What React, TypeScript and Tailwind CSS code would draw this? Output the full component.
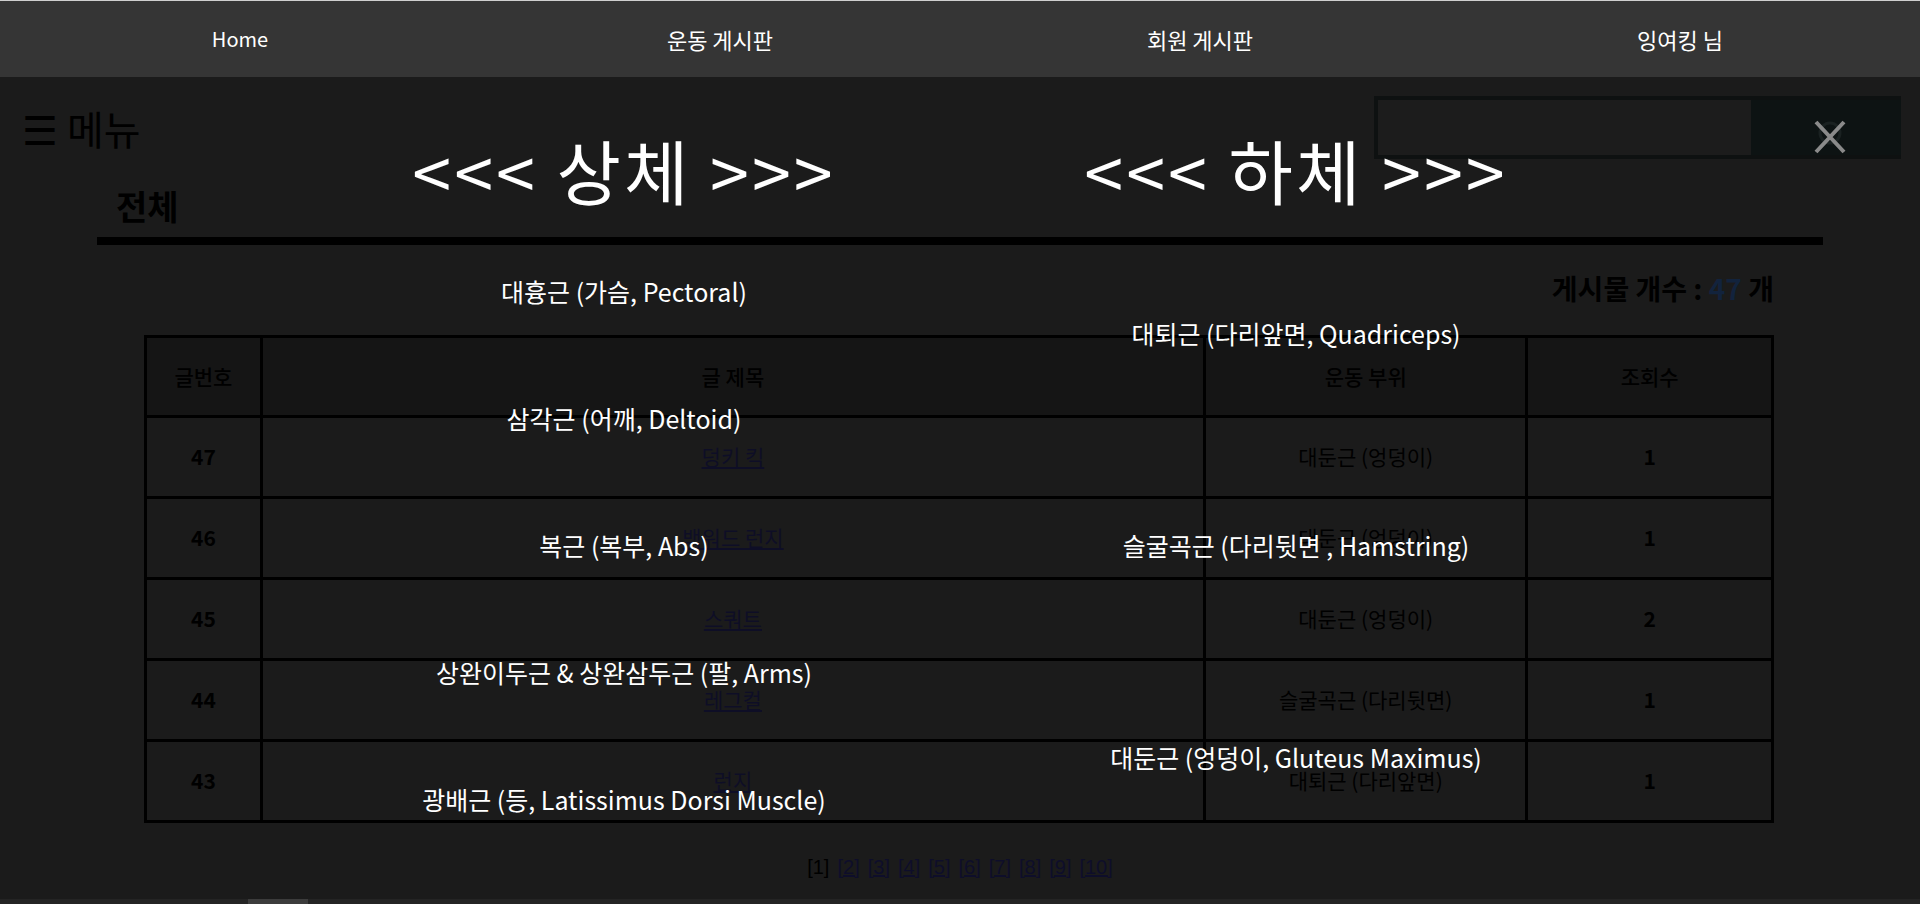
import React from "react";

const rows = [
  { no: 47, title: "덩키 킥", part: "대둔근 (엉덩이)", views: 1 },
  { no: 46, title: "백워드 런지", part: "대둔근 (엉덩이)", views: 1 },
  { no: 45, title: "스쿼트", part: "대둔근 (엉덩이)", views: 2 },
  { no: 44, title: "레그컬", part: "슬굴곡근 (다리뒷면)", views: 1 },
  { no: 43, title: "런지", part: "대퇴근 (다리앞면)", views: 1 },
];

const upper = [
  "대흉근 (가슴, Pectoral)",
  "삼각근 (어깨, Deltoid)",
  "복근 (복부, Abs)",
  "상완이두근 & 상완삼두근 (팔, Arms)",
  "광배근 (등, Latissimus Dorsi Muscle)",
];

const lower = [
  "대퇴근 (다리앞면, Quadriceps)",
  "슬굴곡근 (다리뒷면 , Hamstring)",
  "대둔근 (엉덩이, Gluteus Maximus)",
];

export default function App() {
  return (
    <div className="relative w-[1920px] h-[904px] overflow-hidden bg-[#1b1b1b] font-['Noto_Sans_CJK_KR',sans-serif] flex flex-col">
      {/* Nav */}
      <nav className="h-[77px] shrink-0 border-t border-[#cfcfcf] bg-[#353535] grid grid-cols-4 items-center text-white text-[22px]">
        <div className="text-center text-[20px]">Home</div>
        <div className="text-center">운동 게시판</div>
        <div className="text-center">회원 게시판</div>
        <div className="text-center">잉여킹 님</div>
      </nav>

      {/* Dimmed page */}
      <div className="flex items-center justify-between mt-[19px] h-[63px] pl-[22px] pr-[19px]">
        <div className="text-[40px] leading-none text-black">☰ 메뉴</div>
        <div className="w-[527px] h-[63px] bg-[#0e1111] flex p-[4px] pr-0">
          <div className="w-[373px] h-full bg-[#1c1c1c]" />
          <div className="flex-1 h-full bg-[#0d1313]" />
        </div>
      </div>

      <div className="mt-[23px] ml-[116px] text-[34px] leading-[48px] font-bold text-black">전체</div>
      <div className="mt-[7px] ml-[97px] w-[1726px] h-[8px] bg-black" />

      <div className="ml-[144px] w-[1630px]">
        <div className="mt-[24px] text-right text-[28px] leading-[38px] font-bold text-black">
          게시물 개수 : <span className="text-[#12233d]">47</span> 개
        </div>
        <table className="mt-[28px] w-[1630px] border-collapse border-[3px] border-black text-black text-[21px]">
          <thead>
            <tr className="h-[80px] bg-[#151515]">
              <th className="w-[116px] border-[3px] border-black font-medium">글번호</th>
              <th className="w-[945px] border-[3px] border-black font-medium">글 제목</th>
              <th className="w-[323px] border-[3px] border-black font-medium">운동 부위</th>
              <th className="w-[246px] border-[3px] border-black font-medium">조회수</th>
            </tr>
          </thead>
          <tbody>
            {rows.map((r) => (
              <tr key={r.no} className="h-[81px]">
                <td className="border-[3px] border-black text-center font-bold">{r.no}</td>
                <td className="border-[3px] border-black text-center">
                  <span className="underline text-[#0e0e26]">{r.title}</span>
                </td>
                <td className="border-[3px] border-black text-center">{r.part}</td>
                <td className="border-[3px] border-black text-center font-bold">{r.views}</td>
              </tr>
            ))}
          </tbody>
        </table>
      </div>

      <div className="mt-[30px] flex justify-center gap-[8px] text-[20px] leading-[28px] font-['Liberation_Sans',sans-serif] text-black">
        <span>[1]</span>
        {[2, 3, 4, 5, 6, 7, 8, 9, 10].map((n) => (
          <span key={n} className="underline text-[#0e0e2a]">[{n}]</span>
        ))}
      </div>

      <div className="mt-auto h-[5px] bg-[#242424] flex">
        <div className="ml-[248px] w-[60px] h-full bg-[#3c3c3c]" />
      </div>

      {/* Overlay menu */}
      <div className="absolute inset-x-0 top-[77px] bottom-0 flex justify-center gap-[112px] text-white">
        <div className="w-[560px] flex flex-col items-center pt-[51px]">
          <div className="text-[70px] leading-[84px] tracking-[3px]">&lt;&lt;&lt; 상체 &gt;&gt;&gt;</div>
          <div className="mt-[64px] flex flex-col items-center gap-[97px]">
            {upper.map((t) => (
              <div key={t} className="text-[25px] leading-[30px]">{t}</div>
            ))}
          </div>
        </div>
        <div className="w-[560px] flex flex-col items-center pt-[51px]">
          <div className="text-[70px] leading-[84px] tracking-[3px]">&lt;&lt;&lt; 하체 &gt;&gt;&gt;</div>
          <div className="mt-[106px] flex flex-col items-center gap-[182px]">
            {lower.map((t) => (
              <div key={t} className="text-[25px] leading-[30px]">{t}</div>
            ))}
          </div>
        </div>
        <svg className="absolute left-[1812px] top-[42px]" width="36" height="36" viewBox="0 0 36 36">
          <circle cx="18" cy="14" r="10" fill="none" stroke="#1a2121" strokeWidth="3" />
          <path d="M4 3 L32 33 M32 3 L4 33" stroke="#8a8a8a" strokeWidth="4" />
        </svg>
      </div>
    </div>
  );
}
